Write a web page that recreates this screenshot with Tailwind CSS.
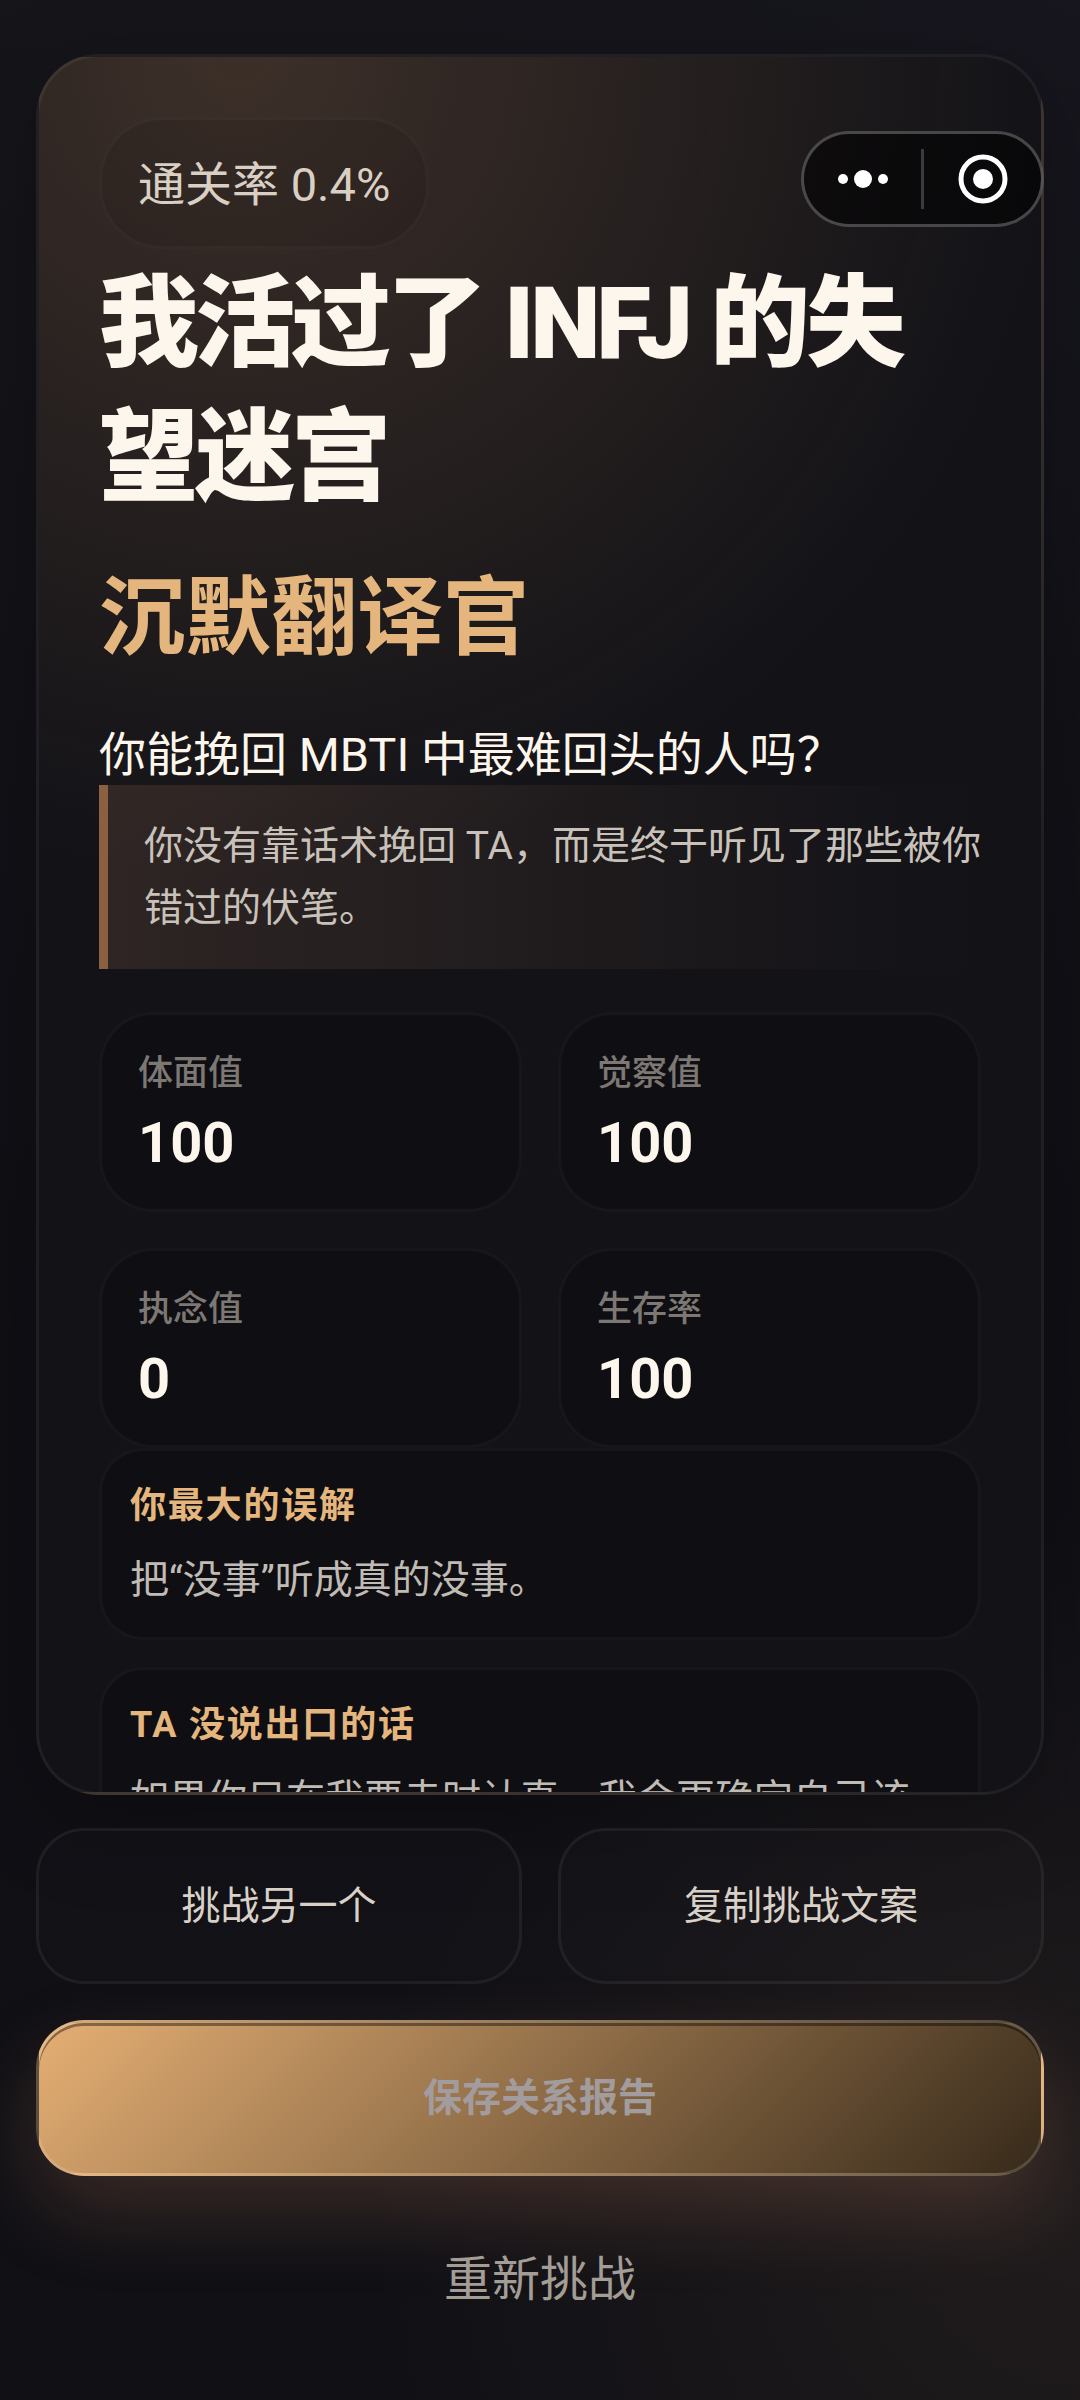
<!DOCTYPE html>
<html lang="zh-CN">
<head>
    <meta charset="UTF-8">
    <meta name="viewport" content="width=device-width, initial-scale=1.0">
    <title>INFJ 的失望迷宫</title>
    <script src="https://cdn.jsdelivr.net/npm/@tailwindcss/browser@4"></script>
</head>
<body class="bg-[#101015] font-['Roboto','Noto_Sans_CJK_SC',sans-serif] text-[#fdf6ec]">

    <div class="relative flex h-screen flex-col px-9 pt-[54px] pb-[84px] bg-[radial-gradient(circle_at_100%_0%,rgba(60,45,120,0.05),transparent_700px),radial-gradient(circle_at_100%_92%,rgba(229,170,120,0.08),transparent_720px),linear-gradient(180deg,#15151a,#0f0f15_55%,#101015)]">

        <!-- 小程序胶囊按钮 -->
        <div class="absolute top-[131px] right-9 z-10 flex h-24 w-[243px] items-center rounded-full border-3 border-white/25 bg-black/55">
            <button type="button" aria-label="更多" class="flex h-full flex-1 items-center justify-center">
                <svg class="h-5 w-[52px]" viewBox="0 0 52 20" fill="#fff">
                    <circle cx="6" cy="10" r="5" />
                    <circle cx="26" cy="10" r="9" />
                    <circle cx="46" cy="10" r="5" />
                </svg>
            </button>
            <span class="h-[60px] w-[3px] bg-white/20"></span>
            <button type="button" aria-label="关闭" class="flex h-full flex-1 items-center justify-center">
                <svg class="size-[50px]" viewBox="0 0 50 50">
                    <circle cx="25" cy="25" r="22" fill="none" stroke="#fff" stroke-width="5" />
                    <circle cx="25" cy="25" r="10" fill="#fff" />
                </svg>
            </button>
        </div>

        <!-- 关系报告卡片 -->
        <main class="min-h-0 flex-1 overflow-y-auto [scrollbar-width:none] rounded-[63px] border-3 border-white/6 bg-[#121217] bg-[radial-gradient(circle_at_20%_0%,rgba(230,165,110,0.2),transparent_820px)] px-[60px] pt-[60px] shadow-[0_24px_90px_rgba(0,0,0,0.25)]">
            <p class="w-fit rounded-[63px] border-3 border-white/3 bg-black/8 px-9 pt-[29px] pb-[25px] text-[47px] leading-[72px] text-[#d9cfc4]">通关率 0.4%</p>

            <h1 class="mt-2 text-[100px] leading-[134px] font-black tracking-[-4px]">我活过了 INFJ 的失望迷宫</h1>
            <h2 class="mt-9 text-[86px] leading-[116px] font-bold text-[#e4b67d]">沉默翻译官</h2>
            <p class="mt-12 text-[47px] leading-[60px]">你能挽回 MBTI 中最难回头的人吗？</p>

            <blockquote class="border-l-9 border-[#8a6040] bg-linear-to-r from-[#e8a478]/13 to-transparent py-[30px] pl-9 text-[39px] leading-[62px] text-[#c9c2ba]">你没有靠话术挽回 TA，而是终于听见了那些被你错过的伏笔。</blockquote>

            <dl class="mt-[43px] grid grid-cols-2 gap-9">
                <div class="rounded-[54px] border-3 border-white/3 bg-black/15 px-9 pt-[34px] pb-[30px]">
                    <dt class="text-[35px] leading-[50px] font-medium text-[#7d7874]">体面值</dt>
                    <dd class="mt-2 text-[56px] leading-[72px] font-bold">100</dd>
                </div>
                <div class="rounded-[54px] border-3 border-white/3 bg-black/15 px-9 pt-[34px] pb-[30px]">
                    <dt class="text-[35px] leading-[50px] font-medium text-[#7d7874]">觉察值</dt>
                    <dd class="mt-2 text-[56px] leading-[72px] font-bold">100</dd>
                </div>
                <div class="rounded-[54px] border-3 border-white/3 bg-black/15 px-9 pt-[34px] pb-[30px]">
                    <dt class="text-[35px] leading-[50px] font-medium text-[#7d7874]">执念值</dt>
                    <dd class="mt-2 text-[56px] leading-[72px] font-bold">0</dd>
                </div>
                <div class="rounded-[54px] border-3 border-white/3 bg-black/15 px-9 pt-[34px] pb-[30px]">
                    <dt class="text-[35px] leading-[50px] font-medium text-[#7d7874]">生存率</dt>
                    <dd class="mt-2 text-[56px] leading-[72px] font-bold">100</dd>
                </div>
            </dl>

            <section class="rounded-[44px] border-3 border-white/3 bg-black/15 px-7 pt-[30px] pb-[26px]">
                <h3 class="text-[36px] leading-[50px] font-bold tracking-wider text-[#e4b67d]">你最大的误解</h3>
                <p class="mt-[18px] text-[39px] leading-[62px] text-[#c0bbb4]">把“没事”听成真的没事。</p>
            </section>
            <section class="mt-[27px] rounded-[44px] border-3 border-white/3 bg-black/15 px-7 pt-[30px] pb-[26px]">
                <h3 class="text-[36px] leading-[50px] font-bold tracking-wider text-[#e4b67d]">TA 没说出口的话</h3>
                <p class="mt-[18px] text-[39px] leading-[62px] text-[#c0bbb4]">如果你只在我要走时认真，我会更确定自己该走。</p>
            </section>
        </main>

        <!-- 操作区 -->
        <footer class="mt-[33px] flex flex-col gap-9">
            <div class="grid grid-cols-2 gap-9">
                <button type="button" class="h-[156px] rounded-[48px] border-3 border-white/6 bg-white/1 text-[39px] text-[#d9d1c7]">挑战另一个</button>
                <button type="button" class="h-[156px] rounded-[48px] border-3 border-white/6 bg-white/1 text-[39px] text-[#d9d1c7]">复制挑战文案</button>
            </div>
            <button type="button" class="h-[156px] rounded-[48px] border-3 border-white/15 bg-[linear-gradient(135deg,#e5af74,#372a1a)] text-[39px] font-bold text-[#a29c9e] shadow-[0_36px_84px_rgba(229,150,110,0.2),inset_0_3px_0_rgba(0,0,0,0.4)]">保存关系报告</button>
            <a href="#" class="mt-8 text-center text-[48px] leading-[72px] text-[#a39d96]">重新挑战</a>
        </footer>
    </div>

</body>
</html>
